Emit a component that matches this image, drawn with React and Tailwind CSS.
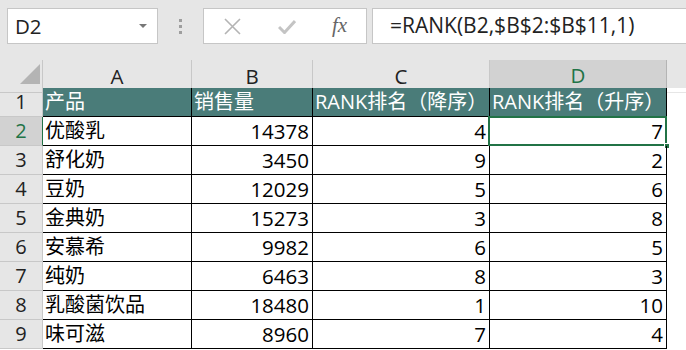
const font = { fontFamily: '"Open Sans", "Noto Sans CJK SC", sans-serif' };

const rows = [
  ["优酸乳", 14378, 4, 7],
  ["舒化奶", 3450, 9, 2],
  ["豆奶", 12029, 5, 6],
  ["金典奶", 15273, 3, 8],
  ["安慕希", 9982, 6, 5],
  ["纯奶", 6463, 8, 3],
  ["乳酸菌饮品", 18480, 1, 10],
  ["味可滋", 8960, 7, 4],
];

const cols = "grid grid-cols-[43px_149px_121px_177px_177px_1fr]";

function RowHead({ n, active }) {
  return (
    <div
      className={`flex h-[29px] items-center justify-center border-b border-r border-[#c8c8c8] text-[20px] ${
        active ? "bg-[#d2d2d2] text-[#217346] border-r-[#217346]" : "bg-[#e6e6e6] text-[#222]"
      }`}
    >
      {n}
    </div>
  );
}

export default function App() {
  return (
    <div className="h-[350px] w-[686px] overflow-hidden bg-white" style={font}>
      {/* formula bar */}
      <div className="flex h-[60px] items-start bg-[#e6e6e6] pt-[8px]">
        <div className="ml-[7px] flex h-[36px] w-[151px] items-center justify-between border border-[#c6c6c6] bg-white pl-[7px] pr-[10px]">
          <span className="text-[20.5px] text-[#222]">D2</span>
          <span className="h-0 w-0 border-x-[4px] border-t-[4px] border-x-transparent border-t-[#777]" />
        </div>
        <div className="ml-[21px] mt-[11px] flex flex-col gap-[3px]">
          <span className="h-[3px] w-[3px] bg-[#9e9e9e]" />
          <span className="h-[3px] w-[3px] bg-[#9e9e9e]" />
          <span className="h-[3px] w-[3px] bg-[#9e9e9e]" />
        </div>
        <div className="ml-[21px] flex h-[36px] w-[164px] items-center border border-[#c6c6c6] bg-white">
          <svg className="ml-[20px]" width="17" height="17" viewBox="0 0 17 17">
            <path d="M1 1 L16 16 M16 1 L1 16" stroke="#b4b4b4" strokeWidth="1.6" fill="none" />
          </svg>
          <svg className="ml-[37px]" width="18" height="15" viewBox="0 0 18 15">
            <path d="M1 8 L6.5 13.5 L17 2" stroke="#c4c4c4" strokeWidth="3" fill="none" />
          </svg>
          <span
            className="ml-[36px] text-[21px] italic text-[#666]"
            style={{ fontFamily: '"Liberation Serif", serif' }}
          >
            fx
          </span>
        </div>
        <div className="ml-[5px] flex h-[36px] flex-1 items-center border border-r-0 border-[#c6c6c6] bg-white pl-[17px]">
          <span className="text-[21px] text-[#222]">=RANK(B2,$B$2:$B$11,1)</span>
        </div>
      </div>

      {/* column headers */}
      <div className={`${cols} h-[28px] bg-[#e6e6e6]`}>
        <div className="relative border-b border-r border-[#c8c8c8]">
          <svg className="absolute left-[20px] top-[4px]" width="20" height="20" viewBox="0 0 20 20">
            <path d="M20 0 L20 20 L0 20 Z" fill="#b4b4b4" />
          </svg>
        </div>
        {["A", "B", "C"].map((c) => (
          <div
            key={c}
            className="flex items-center justify-center border-b border-r border-[#c8c8c8] text-[20.5px] text-[#222]"
          >
            {c}
          </div>
        ))}
        <div className="flex items-center justify-center border-b-2 border-r border-b-[#217346] border-r-[#b4b4b4] bg-[#d2d2d2] text-[20.5px] text-[#217346]">
          D
        </div>
        <div className="border-b border-[#e6e6e6]" />
      </div>

      {/* header row 1 */}
      <div className={cols}>
        <RowHead n={1} />
        {["产品", "销售量", "RANK排名（降序）", "RANK排名（升序）"].map((t) => (
          <div
            key={t}
            className="flex h-[29px] items-center overflow-hidden whitespace-nowrap border-b border-r border-black bg-[#4a7c79] pl-[2px] text-[20px] text-white"
          >
            {t}
          </div>
        ))}
        <div className="h-[29px]" />
      </div>

      {rows.map((r, i) => (
        <div key={r[0]} className={cols}>
          <RowHead n={i + 2} active={i === 0} />
          <div className="flex h-[29px] items-center border-b border-r border-black pl-[2px] text-[20px] text-black">
            {r[0]}
          </div>
          {r.slice(1).map((v, j) => (
            <div
              key={j}
              className="relative flex h-[29px] items-center justify-end border-b border-r border-black pr-[3px] text-[20.5px] text-black"
            >
              {v}
              {i === 0 && j === 2 && (
                <>
                  <span className="absolute -left-[2px] -right-[1px] -top-[1px] -bottom-[1px] border-2 border-[#217346]" />
                  <span className="absolute -bottom-[4px] -right-[4px] h-[6px] w-[6px] border border-white bg-[#217346]" />
                </>
              )}
            </div>
          ))}
          <div className="h-[29px]" />
        </div>
      ))}
    </div>
  );
}
